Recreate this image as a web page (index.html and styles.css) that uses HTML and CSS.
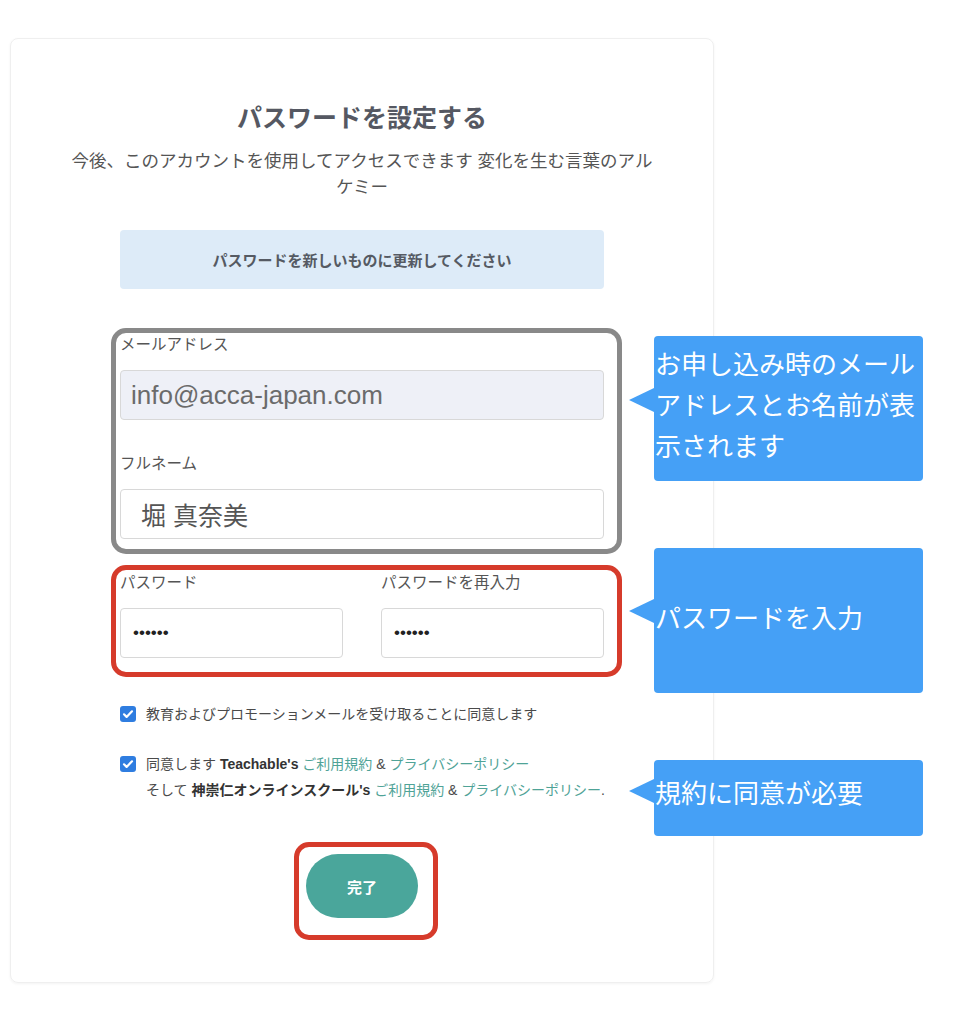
FILE: index.html
```html
<!DOCTYPE html>
<html lang="ja">
<head>
  <meta charset="UTF-8" />
  <title>パスワードを設定する</title>
  <link rel="stylesheet" href="styles.css">
</head>
<body>
  <div class="page">
    <div class="card">
      <h1 class="title">パスワードを設定する</h1>
      <p class="lead">今後、このアカウントを使用してアクセスできます 変化を生む言葉のアルケミー</p>

      <div class="form">
        <div class="notice">パスワードを新しいものに更新してください</div>

        <div class="mark mark-gray">
          <label class="field-label">メールアドレス</label>
          <input class="field field-readonly" type="text" value="info@acca-japan.com" readonly />
          <label class="field-label label-gap">フルネーム</label>
          <input class="field field-name" type="text" value="堀 真奈美" />
        </div>

        <div class="mark mark-red pw-row">
          <div>
            <label class="field-label">パスワード</label>
            <input class="field field-pw" type="password" value="123456" />
          </div>
          <div>
            <label class="field-label">パスワードを再入力</label>
            <input class="field field-pw" type="password" value="123456" />
          </div>
        </div>

        <div class="check">
          <span class="box"><svg viewBox="0 0 16 16" width="16" height="16"><path d="M4 8.3l2.6 2.6L12 5.3" fill="none" stroke="#fff" stroke-width="2.2" stroke-linecap="round" stroke-linejoin="round"/></svg></span>
          <div class="check-text">教育およびプロモーションメールを受け取ることに同意します</div>
        </div>

        <div class="check">
          <span class="box"><svg viewBox="0 0 16 16" width="16" height="16"><path d="M4 8.3l2.6 2.6L12 5.3" fill="none" stroke="#fff" stroke-width="2.2" stroke-linecap="round" stroke-linejoin="round"/></svg></span>
          <div class="check-text">
            同意します <b>Teachable's</b> <a href="#">ご利用規約</a> &amp; <a href="#">プライバシーポリシー</a><br>
            そして <b>神崇仁オンラインスクール's</b> <a href="#">ご利用規約</a> &amp; <a href="#">プライバシーポリシー</a>.
          </div>
        </div>

        <div class="submit">
          <div class="mark-red btn-mark">
            <button class="btn">完了</button>
          </div>
        </div>
      </div>
    </div>

    <div class="callout callout-1">お申し込み時のメールアドレスとお名前が表示されます</div>
    <div class="callout callout-2">パスワードを入力</div>
    <div class="callout callout-3">規約に同意が必要</div>
  </div>
</body>
</html>
```

FILE: styles.css
```css
* { box-sizing: border-box; }
body {
  margin: 0;
  background: #fff;
  font-family: 'Liberation Sans', 'Noto Sans CJK JP', sans-serif;
  color: #555;
}
.page {
  position: relative;
  padding: 38px 0 40px 10px;
}
.card {
  width: 704px;
  border: 1px solid #efefef;
  border-radius: 8px;
  box-shadow: 0 1px 3px rgba(0, 0, 0, 0.05);
  padding: 61px 0 42px;
  text-align: center;
}
.title {
  margin: 0;
  font-size: 25px;
  line-height: 36px;
  font-weight: bold;
  color: #555862;
}
.lead {
  width: 592px;
  margin: 12px auto 0;
  font-size: 17.5px;
  line-height: 26px;
  color: #555;
}
.form {
  width: 484px;
  margin: 30px auto 0;
  text-align: left;
}
.notice {
  height: 59px;
  background: #ddebf8;
  border-radius: 4px;
  font-size: 15px;
  font-weight: bold;
  color: #555a63;
  display: flex;
  align-items: center;
  justify-content: center;
}
.mark {
  margin-left: -9px;
  margin-right: -18px;
  border-width: 5px;
  border-style: solid;
  border-radius: 15px;
}
.mark-gray {
  margin-top: 39px;
  border-color: #898989;
  padding: 2px 13px 10px 4px;
}
.mark-red {
  border: 5px solid #d63b2b;
  border-radius: 15px;
}
.field-label {
  display: block;
  font-size: 15.5px;
  line-height: 20px;
  color: #555;
}
.label-gap { margin-top: 34px; }
.field {
  display: block;
  width: 100%;
  height: 50px;
  margin-top: 15px;
  padding: 0 10px;
  border: 1px solid #d8d8d8;
  border-radius: 4px;
  background: #fff;
  font-family: 'Liberation Sans', 'Noto Sans CJK JP', sans-serif;
  font-size: 25px;
  color: #555;
}
.field-readonly {
  background: #eef0f7;
  color: #6b6b6b;
  font-size: 26px;
}
.field-name { padding-left: 20px; }
.field-pw {
  font-size: 17px;
  padding-left: 12px;
  color: #222;
}
.pw-row {
  margin-top: 11px;
  padding: 3px 13px 14px 4px;
  display: grid;
  grid-template-columns: 1fr 1fr;
  column-gap: 38px;
}
.check {
  display: flex;
  gap: 10px;
  margin-top: 24px;
  font-size: 14px;
  line-height: 26px;
  color: #4a4a4a;
}
.box {
  flex: none;
  width: 16px;
  height: 16px;
  margin-top: 5px;
  border-radius: 3px;
  background: #2f7de0;
}
.box svg { display: block; }
.check-text { white-space: nowrap; }
.check-text b { color: #333; }
.check-text a {
  color: #4fa397;
  text-decoration: none;
}
.submit {
  margin-top: 39px;
  display: flex;
  justify-content: center;
  padding-left: 8px;
}
.btn-mark {
  padding: 7px 15px 17px 7px;
}
.btn {
  display: block;
  width: 112px;
  height: 64px;
  border: none;
  border-radius: 32px;
  background: #4aa69b;
  color: #fff;
  font-family: 'Liberation Sans', 'Noto Sans CJK JP', sans-serif;
  font-size: 15px;
  font-weight: bold;
  cursor: pointer;
}
.callout {
  position: absolute;
  left: 654px;
  width: 269px;
  background: #45a0f6;
  border-radius: 4px;
  color: #fff;
  font-family: 'Noto Sans CJK JP', sans-serif;
  font-size: 26px;
  line-height: 41px;
  padding-left: 1px;
}
.callout::before {
  content: "";
  position: absolute;
  left: -25px;
  border-right: 25px solid #45a0f6;
  border-top: 12px solid transparent;
  border-bottom: 12px solid transparent;
}
.callout-1 { top: 336px; height: 145px; padding-top: 6px; }
.callout-1::before { top: 52px; }
.callout-2 { top: 548px; height: 145px; padding-top: 48px; }
.callout-2::before { top: 51px; }
.callout-3 { top: 760px; height: 76px; padding-top: 11px; }
.callout-3::before { top: 19px; }
```
